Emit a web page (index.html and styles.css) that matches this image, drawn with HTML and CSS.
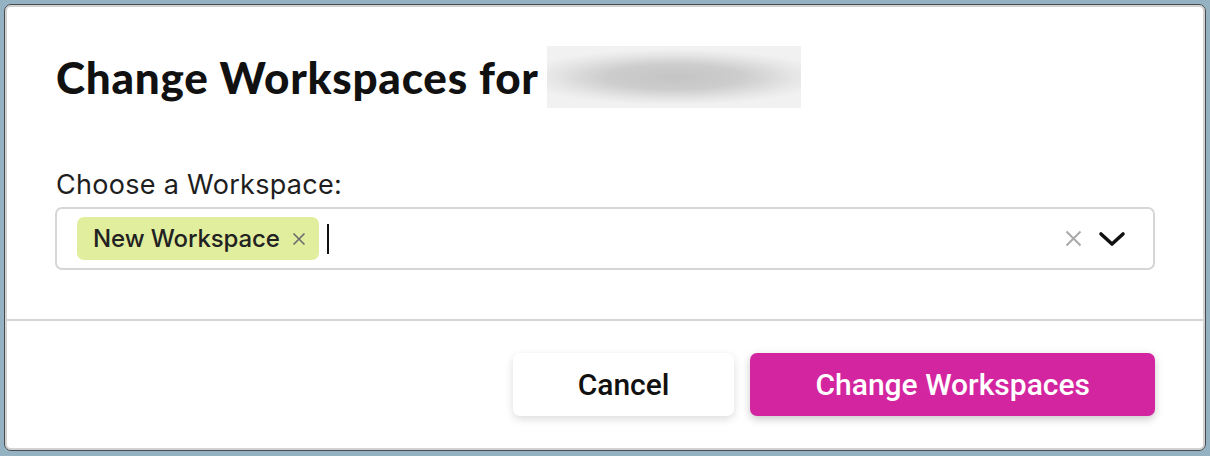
FILE: index.html
```html
<!DOCTYPE html>
<html>
<head>
<meta charset="utf-8">
<link rel="stylesheet" href="styles.css">
</head>
<body>
<div class="dialog">
  <div class="body">
    <div class="title-row">
      <h1 class="title">Change Workspaces for</h1>
      <div class="blur"></div>
    </div>
    <label class="label">Choose a Workspace:</label>
    <div class="select">
      <div class="values">
        <span class="tag">New Workspace
          <svg class="tag-x" width="14" height="14" viewBox="0 0 14 14"><path d="M1.5 1.5 L12.5 12.5 M12.5 1.5 L1.5 12.5" stroke="#6b6b6b" stroke-width="1.6" fill="none"/></svg>
        </span>
        <span class="caret"></span>
      </div>
      <div class="indicators">
        <svg class="clear" width="17" height="17" viewBox="0 0 17 17"><path d="M1.5 1.5 L15.5 15.5 M15.5 1.5 L1.5 15.5" stroke="#a9a9a9" stroke-width="2" fill="none"/></svg>
        <svg class="chev" width="28" height="16" viewBox="0 0 28 16"><path d="M3 3 L14 13 L25 3" stroke="#111" stroke-width="3.6" fill="none" stroke-linecap="round" stroke-linejoin="round"/></svg>
      </div>
    </div>
  </div>
  <div class="footer">
    <button class="btn btn-cancel">Cancel</button>
    <button class="btn btn-primary">Change Workspaces</button>
  </div>
</div>
</body>
</html>
```
FILE: styles.css
```css
html, body {
  margin: 0;
  padding: 0;
}
body {
  background: #94b2c2;
  width: 1210px;
  height: 456px;
  overflow: hidden;
  padding: 4px;
  box-sizing: border-box;
}
.dialog {
  width: 1202px;
  height: 447px;
  box-sizing: border-box;
  background: #fff;
  border: 1px solid #474b4e;
  border-radius: 7px;
  box-shadow: inset 0 0 0 2px #d2d2d2;
  display: flex;
  flex-direction: column;
  overflow: hidden;
  font-family: Inter, "Noto Sans", sans-serif;
}
.body {
  padding: 41px 48px 0 49px;
  height: 316px;
  box-sizing: border-box;
  border-bottom: 2px solid #d4d4d4;
  margin: 0 2px;
}
.title-row {
  display: flex;
  align-items: center;
  gap: 8px;
  height: 62px;
}
.title {
  margin: 0;
  font-family: Lato, sans-serif;
  font-weight: 900;
  font-size: 44px;
  line-height: 52px;
  color: #111;
  letter-spacing: 0.75px;
}
.blur {
  width: 254px;
  height: 62px;
  background: radial-gradient(ellipse 60% 45% at 50% 50%, #c4c4c4 0%, #cdcdcd 45%, #e6e6e6 80%, #f1f1f1 100%);
}
.label {
  display: block;
  margin-top: 61px;
  font-size: 27px;
  line-height: 32px;
  letter-spacing: 0.3px;
  color: #1e1e1e;
}
.select {
  margin-top: 6px;
  margin-left: -1px;
  height: 63px;
  box-sizing: border-box;
  border: 2px solid #d6d6d6;
  border-radius: 7px;
  display: flex;
  align-items: center;
  padding: 0 27px 0 20px;
}
.values {
  flex: 1;
  display: flex;
  align-items: center;
}
.tag {
  display: inline-flex;
  align-items: center;
  height: 43px;
  padding: 0 13px 0 16px;
  background: #e1ee9d;
  border-radius: 7px;
  font-size: 24px;
  font-weight: 500;
  letter-spacing: -0.1px;
  color: #222;
  gap: 12px;
}
.tag-x {
  display: block;
}
.caret {
  display: inline-block;
  width: 2px;
  height: 30px;
  background: #111;
  margin-left: 8px;
}
.indicators {
  display: flex;
  align-items: center;
  gap: 16px;
}
.clear, .chev {
  display: block;
}
.footer {
  flex: 1;
  display: flex;
  justify-content: flex-end;
  align-items: center;
  padding: 0 50px 2px 0;
  gap: 16px;
}
.btn {
  height: 63px;
  border: none;
  border-radius: 7px;
  font-family: Roboto, sans-serif;
  font-size: 30px;
  font-weight: 500;
  padding: 0 65px;
  cursor: pointer;
}
.btn-cancel {
  background: #fff;
  color: #111;
  box-shadow: 0 3px 8px rgba(0,0,0,0.14);
}
.btn-primary {
  background: #d425a0;
  color: #fff;
  box-shadow: 0 3px 8px rgba(0,0,0,0.22);
}
```
